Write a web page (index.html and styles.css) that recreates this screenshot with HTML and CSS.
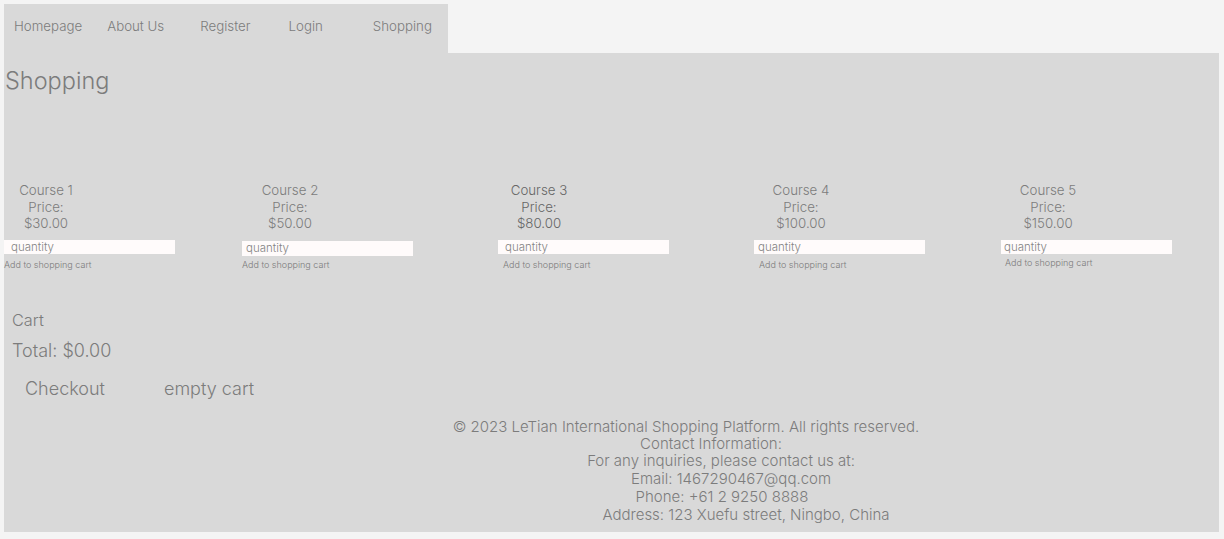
FILE: index.html
```html
<!DOCTYPE html>
<html>
<head>
<meta charset="utf-8">
<link rel="stylesheet" href="styles.css">
</head>
<body>
<nav class="nav">
  <a class="nav-item nav-home">Homepage</a>
  <a class="nav-item nav-about">About Us</a>
  <a class="nav-item nav-register">Register</a>
  <a class="nav-item nav-login">Login</a>
  <a class="nav-item nav-shop">Shopping</a>
</nav>
<main class="panel">
  <h1 class="title">Shopping</h1>
  <section class="products">
    <div class="product p1">
      <div class="info">Course 1<br>Price:<br>$30.00</div>
      <input class="qty" placeholder="quantity">
      <div class="add">Add to shopping cart</div>
    </div>
    <div class="product p2">
      <div class="info">Course 2<br>Price:<br>$50.00</div>
      <input class="qty" placeholder="quantity">
      <div class="add">Add to shopping cart</div>
    </div>
    <div class="product p3">
      <div class="info dark">Course 3<br>Price:<br>$80.00</div>
      <input class="qty" placeholder="quantity">
      <div class="add">Add to shopping cart</div>
    </div>
    <div class="product p4">
      <div class="info">Course 4<br>Price:<br>$100.00</div>
      <input class="qty" placeholder="quantity">
      <div class="add">Add to shopping cart</div>
    </div>
    <div class="product p5">
      <div class="info">Course 5<br>Price:<br>$150.00</div>
      <input class="qty" placeholder="quantity">
      <div class="add">Add to shopping cart</div>
    </div>
  </section>
  <section class="cart">
    <div class="cart-title">Cart</div>
    <div class="cart-total">Total: $0.00</div>
    <div class="cart-actions">
      <span class="btn">Checkout</span>
      <span class="btn">empty cart</span>
    </div>
  </section>
  <footer class="footer">
    <div class="f1">© 2023 LeTian International Shopping Platform. All rights reserved.</div>
    <div class="f2">Contact Information:</div>
    <div class="f3">For any inquiries, please contact us at:</div>
    <div class="f4">Email: 1467290467@qq.com</div>
    <div class="f5">Phone: +61 2 9250 8888</div>
    <div class="f6">Address: 123 Xuefu street, Ningbo, China</div>
  </footer>
</main>
</body>
</html>
```
FILE: styles.css
```css
html, body {
  margin: 0;
  padding: 0;
  background: #f4f4f4;
}
body {
  padding: 4px 5px 7px 4px;
  font-family: Inter, "Noto Sans", sans-serif;
  font-weight: 300;
  color: #7c7c7c;
}
.nav {
  width: 444px;
  height: 49px;
  background: #d9d9d9;
  display: flex;
  align-items: center;
  font-size: 13.3px;
  white-space: nowrap;
}
.nav-item {
  color: #7c7c7c;
  text-decoration: none;
  flex-shrink: 0;
  position: relative;
  top: -3px;
}
.nav-home { margin-left: 10px; }
.nav-about { margin-left: 25px; }
.nav-register { margin-left: 36px; }
.nav-login { margin-left: 38px; }
.nav-shop { margin-left: 50px; }
.panel {
  background: #d9d9d9;
  height: 479px;
  display: flex;
  flex-direction: column;
}
.title {
  margin: 13px 0 0 1px;
  font-size: 23.5px;
  font-weight: 300;
  line-height: 30px;
  color: #7c7c7c;
}
.products {
  display: grid;
  grid-template-columns: 238px 256px 256px 247px 1fr;
  margin-top: 86px;
}
.info {
  width: 86px;
  text-align: center;
  font-size: 13.3px;
  line-height: 16.5px;
  white-space: nowrap;
}
.dark { color: #666; }
.p1 .info { margin-left: -1px; }
.p2 .info { margin-left: 5px; }
.p3 .info { margin-left: -2px; }
.p4 .info { margin-left: 4px; }
.p5 .info { margin-left: 4px; }
.qty {
  display: block;
  box-sizing: border-box;
  width: 171px;
  height: 14px;
  margin-top: 8px;
  border: none;
  outline: none;
  background: #fffbfb;
  padding: 0 0 0 7px;
  font-family: Inter, "Noto Sans", sans-serif;
  font-weight: 300;
  font-size: 11.5px;
  color: #858585;
}
.qty::placeholder { color: #858585; }
.p2 .qty { margin-top: 9px; height: 15px; padding-left: 4px; }
.p4 .qty { padding-left: 4px; }
.p5 .qty { padding-left: 3px; }
.add {
  font-size: 9px;
  margin-top: 5px;
  color: #7c7c7c;
  white-space: nowrap;
}
.p3 .add, .p4 .add { margin-left: 5px; }
.p5 .add { margin-left: 4px; margin-top: 3px; }
.p2 .add { margin-top: 3px; }
.cart {
  margin-top: 40px;
  padding-left: 8px;
}
.cart-title {
  font-size: 16.3px;
  line-height: 20px;
}
.cart-total {
  font-size: 18px;
  line-height: 22px;
  margin-top: 10px;
}
.cart-actions {
  margin-top: 16px;
  padding-left: 13px;
  font-size: 18px;
  line-height: 22px;
  display: flex;
  gap: 59px;
}
.footer {
  margin-top: 18px;
  font-size: 15px;
  line-height: 17.8px;
  text-align: center;
  white-space: nowrap;
}
.f1 { padding-left: 149px; margin-bottom: -0.8px; }
.f2 { padding-left: 199px; }
.f3 { padding-left: 219px; }
.f4 { padding-left: 239px; }
.f5 { padding-left: 221px; }
.f6 { padding-left: 269px; }
```
